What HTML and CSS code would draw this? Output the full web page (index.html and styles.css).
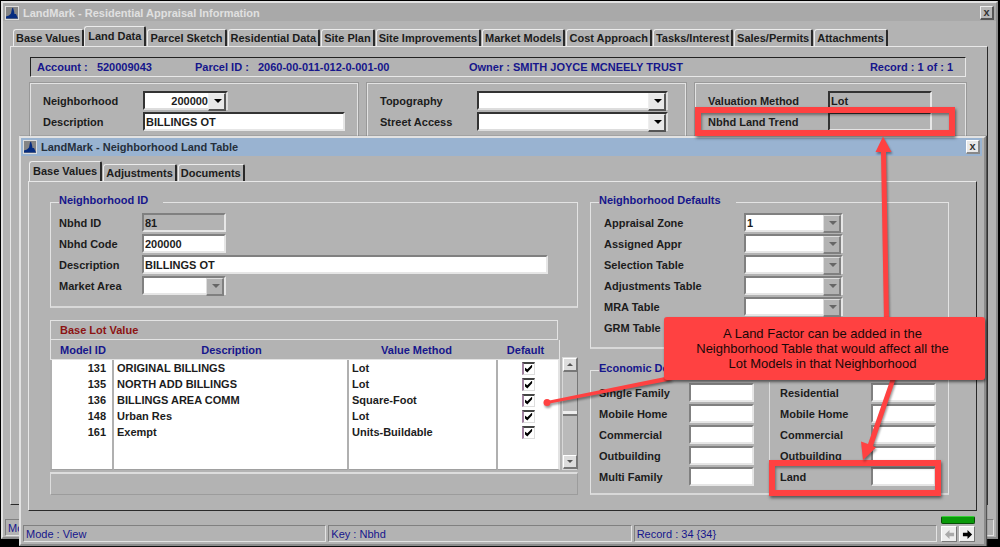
FILE: index.html
```html
<!DOCTYPE html>
<html lang="en">
<head>
<meta charset="utf-8">
<title>LandMark - Residential Appraisal Information</title>
<link rel="stylesheet" href="styles.css">
</head>
<body>
<section class="window window-main">
  <header class="titlebar">
    <svg class="logo" viewBox="0 0 14 14"><path class="logo-bg" d="M0 0h14v14H0z"/><path class="logo-peak" d="M1 12.500V10.500l3-1 2-2 1-5L8 1.500 9 5l.5 3 1.500 0 2 4.500z"/></svg>
    <h1 class="title">LandMark - Residential Appraisal Information</h1>
    <button class="close" type="button">x</button>
  </header>
  <nav class="tabs">
    <button class="tab" type="button">Base Values</button>
    <button class="tab active" type="button">Land Data</button>
    <button class="tab" type="button">Parcel Sketch</button>
    <button class="tab" type="button">Residential Data</button>
    <button class="tab" type="button">Site Plan</button>
    <button class="tab" type="button">Site Improvements</button>
    <button class="tab" type="button">Market Models</button>
    <button class="tab" type="button">Cost Approach</button>
    <button class="tab" type="button">Tasks/Interest</button>
    <button class="tab" type="button">Sales/Permits</button>
    <button class="tab" type="button">Attachments</button>
  </nav>
  <main class="panel">
    <div class="account">
      <span>Account :&nbsp;&nbsp; 520009043</span>
      <span>Parcel ID :&nbsp;&nbsp; 2060-00-011-012-0-001-00</span>
      <span>Owner : SMITH JOYCE MCNEELY TRUST</span>
      <span>Record : 1 of : 1</span>
    </div>
    <div class="parcel">
      <div class="box">
        <div class="row"><label class="label" for="hood">Neighborhood</label><span class="combo combo-short"><select class="field right" id="hood"><option>200000</option></select></span></div>
        <div class="row"><label class="label" for="desc">Description</label><input class="field dark grow" id="desc" value="BILLINGS OT"></div>
      </div>
      <div class="box box-middle">
        <div class="row"><label class="label" for="topo">Topography</label><span class="combo grow"><select class="field" id="topo"><option></option></select></span></div>
        <div class="row"><label class="label" for="street">Street Access</label><span class="combo grow"><select class="field" id="street"><option></option></select></span></div>
      </div>
      <div class="box">
        <div class="row"><label class="label wide" for="method">Valuation Method</label><input class="field dark readonly medium" id="method" value="Lot" readonly></div>
        <div class="row"><label class="label wide" for="trend">Nbhd Land Trend</label><input class="field dark readonly medium" id="trend" readonly></div>
      </div>
    </div>
  </main>
  <footer class="status"><div class="cells"><span class="cell">Mode : View</span></div></footer>
</section>

<section class="window window-child">
  <header class="titlebar">
    <svg class="logo" viewBox="0 0 14 14"><path class="logo-bg" d="M0 0h14v14H0z"/><path class="logo-peak" d="M1 12.500V10.500l3-1 2-2 1-5L8 1.500 9 5l.5 3 1.500 0 2 4.500z"/></svg>
    <h2 class="title">LandMark - Neighborhood Land Table</h2>
    <button class="close" type="button">x</button>
  </header>
  <nav class="tabs">
    <button class="tab active" type="button">Base Values</button>
    <button class="tab" type="button">Adjustments</button>
    <button class="tab" type="button">Documents</button>
  </nav>
  <main class="panel columns">
    <div class="column">
      <fieldset class="group">
        <legend class="legend">Neighborhood ID</legend>
        <div class="row"><label class="label" for="nid">Nbhd ID</label><input class="field readonly short" id="nid" value="81" readonly></div>
        <div class="row"><label class="label" for="ncode">Nbhd Code</label><input class="field short" id="ncode" value="200000"></div>
        <div class="row"><label class="label" for="ndesc">Description</label><input class="field long" id="ndesc" value="BILLINGS OT"></div>
        <div class="row"><label class="label" for="market">Market Area</label><span class="combo muted short"><select class="field" id="market"><option></option></select></span></div>
      </fieldset>
      <div class="models">
        <table class="table">
          <caption class="caption">Base Lot Value</caption>
          <colgroup><col class="col-id"><col><col class="col-method"><col class="col-default"></colgroup>
          <thead><tr><th class="th-id">Model ID</th><th>Description</th><th class="th-method">Value Method</th><th class="th-default">Default</th></tr></thead>
          <tbody>
            <tr><td class="num">131</td><td>ORIGINAL BILLINGS</td><td>Lot</td><td class="mark"><input class="check" type="checkbox" aria-label="Default 131" checked></td></tr>
            <tr><td class="num">135</td><td>NORTH ADD BILLINGS</td><td>Lot</td><td class="mark"><input class="check" type="checkbox" aria-label="Default 135" checked></td></tr>
            <tr><td class="num">136</td><td>BILLINGS AREA COMM</td><td>Square-Foot</td><td class="mark"><input class="check" type="checkbox" aria-label="Default 136" checked></td></tr>
            <tr><td class="num">148</td><td>Urban Res</td><td>Lot</td><td class="mark"><input class="check" type="checkbox" aria-label="Default 148" checked></td></tr>
            <tr><td class="num">161</td><td>Exempt</td><td>Units-Buildable</td><td class="mark"><input class="check" type="checkbox" aria-label="Default 161" checked></td></tr>
            <tr class="filler"><td></td><td></td><td></td><td></td></tr>
          </tbody>
        </table>
        <div class="scrollbar">
          <button class="scroll-button up" type="button" aria-label="Scroll up"></button>
          <span class="thumb"></span>
          <button class="scroll-button down" type="button" aria-label="Scroll down"></button>
        </div>
        <div class="message"></div>
      </div>
    </div>
    <div class="column">
      <fieldset class="group defaults">
        <legend class="legend">Neighborhood Defaults</legend>
        <div class="row"><label class="label" for="zone">Appraisal Zone</label><span class="combo muted"><select class="field" id="zone"><option>1</option></select></span></div>
        <div class="row"><label class="label" for="appr">Assigned Appr</label><span class="combo muted"><select class="field" id="appr"><option></option></select></span></div>
        <div class="row"><label class="label" for="sel">Selection Table</label><span class="combo muted"><select class="field" id="sel"><option></option></select></span></div>
        <div class="row"><label class="label" for="adj">Adjustments Table</label><span class="combo muted"><select class="field" id="adj"><option></option></select></span></div>
        <div class="row"><label class="label" for="mra">MRA Table</label><span class="combo muted"><select class="field" id="mra"><option></option></select></span></div>
        <div class="row"><label class="label" for="grm">GRM Table</label><span class="combo muted"><select class="field" id="grm"><option></option></select></span></div>
      </fieldset>
      <fieldset class="group economic">
        <legend class="legend">Economic Depreciation</legend>
        <div class="factors">
          <div class="row"><label class="label" for="e1">Single Family</label><input class="field" id="e1"></div>
          <div class="row"><label class="label" for="e2">Mobile Home</label><input class="field" id="e2"></div>
          <div class="row"><label class="label" for="e3">Commercial</label><input class="field" id="e3"></div>
          <div class="row"><label class="label" for="e4">Outbuilding</label><input class="field" id="e4"></div>
          <div class="row"><label class="label" for="e5">Multi Family</label><input class="field" id="e5"></div>
        </div>
        <div class="factors second">
          <div class="row"><label class="label" for="f1">Residential</label><input class="field" id="f1"></div>
          <div class="row"><label class="label" for="f2">Mobile Home</label><input class="field" id="f2"></div>
          <div class="row"><label class="label" for="f3">Commercial</label><input class="field" id="f3"></div>
          <div class="row"><label class="label" for="f4">Outbuilding</label><input class="field" id="f4"></div>
          <div class="row"><label class="label" for="f5">Land</label><input class="field" id="f5"></div>
        </div>
      </fieldset>
    </div>
  </main>
  <footer class="status">
    <div class="cells"><span class="cell">Mode : View</span><span class="cell">Key : Nbhd</span><span class="cell">Record : 34 {34}</span></div>
    <div class="pager">
      <span class="lamp"></span>
      <button class="page-button" type="button" aria-label="Previous record" disabled><svg class="arrow" viewBox="0 0 12 12"><path d="M1 6l5-5v3h5v4H6v3z"/></svg></button>
      <button class="page-button" type="button" aria-label="Next record"><svg class="arrow" viewBox="0 0 12 12"><path d="M11 6L6 1v3H1v4h5v3z"/></svg></button>
    </div>
  </footer>
</section>

<div class="highlight highlight-trend"></div>
<div class="highlight highlight-land"></div>
<svg class="pointers" viewBox="0 0 460 547">
  <path d="M344 320L341 152H335.500L343 136.500 351.500 152H346L349 320z"/>
  <path d="M351 378L328 444 321 441.500 323 460 336 447.500 333 446 356 378z"/>
  <path d="M125 377L7 401v3L133 380z"/>
  <circle cx="7" cy="402.500" r="3.500"/>
</svg>
<div class="callout">A Land Factor can be added in the Neighborhood Table that would affect all the Lot Models in that Neighborhood</div>
</body>
</html>
```

FILE: styles.css
```css
* { box-sizing: border-box; }

body {
  margin: 0;
  min-height: 100vh;
  overflow: hidden;
  background: #000;
  color: #1c1c1c;
  font: bold 11px/14px "Liberation Sans", Arial, sans-serif;
}

button, input, select { font: inherit; color: inherit; border-radius: 0; }

/* Windows */
.window {
  position: absolute;
  display: flex;
  flex-direction: column;
  background: #b3b3b3;
  border: 2px solid #e2e2e2;
  border-right-color: #8c8c8c;
  border-bottom-color: #8c8c8c;
}
.window-main { inset: 1px 2px 8px 1px; }
.window-child { inset: 136px 14px 1px 19px; box-shadow: 1px 0 1px #555; }

.titlebar {
  display: flex;
  align-items: center;
  gap: 4px;
  height: 18px;
  padding: 0 2px;
  background: #a9a9a9;
  color: #e0e0e0;
}
.window-child .titlebar { background: #99b3d1; color: #26303c; margin-right: 2px; }
.window-main .titlebar { padding-top: 1px; }
.title { flex: 1; margin: 0; font: inherit; }
.logo { width: 14px; height: 14px; outline: 1px solid #ddd; outline-offset: -1px; }
.logo-bg { fill: #858585; }
.logo-peak { fill: #062c80; }
.close {
  width: 14px;
  height: 14px;
  padding: 0;
  border: 1px solid #eee;
  border-right: 2px solid #555;
  border-bottom: 2px solid #555;
  background: #b8b8b8;
  color: #333;
  line-height: 9px;
}
.window-child .close { background: #e8e8e8; border-color: #fff #888 #888 #fff; }

/* Tabs */
.tabs { display: flex; align-items: flex-end; height: 25px; padding: 0 10px; }
.tab {
  height: 17px;
  padding: 0 2px;
  border: 1px solid #ececec;
  border-right: 2px solid #2a2a2a;
  border-bottom: 0;
  border-radius: 3px 2px 0 0;
  background: #b3b3b3;
  white-space: nowrap;
}
.tab + .tab { margin-left: 1px; }
.tab.active { height: 20px; padding: 0 3px 2px; margin-left: 0; }
.window-child .tabs { height: 25px; padding: 0 8px; }

.panel {
  flex: 1;
  min-height: 0;
  border: 1px solid #e8e8e8;
  border-right: 1px solid #2a2a2a;
  border-bottom: 1px solid #2a2a2a;
}
.window-main .panel { margin: 0 8px 0 7px; padding: 10px 21px 0 19px; }
.window-child .panel { margin: 0 7px 0 7px; padding: 11px 27px 0 21px; }

.account {
  display: grid;
  grid-template-columns: 158px 274px 1fr auto;
  align-items: center;
  height: 20px;
  padding: 0 12px 0 6px;
  border: 1px solid #e8e8e8;
  border-top: 1px solid #222;
  border-left: 1px solid #222;
  color: #16168c;
}

.parcel {
  display: grid;
  grid-template-columns: 1fr 319px 271px;
  gap: 9px;
  margin-top: 6px;
}
.box {
  height: 80px;
  padding: 6px 12px;
  border: 1px solid #e3e3e3;
  box-shadow: 0 0 0 1px #999;
}
.box-middle { padding-right: 17px; }

/* Form rows */
.row { display: flex; align-items: center; height: 21px; }
.label { flex: none; width: 83px; white-space: nowrap; }
.parcel .label { width: 100px; }
.parcel .box-middle .label { width: 97px; }
.parcel .label.wide { width: 120px; }
.grow { flex: 1; min-width: 0; }
.short { width: 84px; }
.medium { width: 104px; }
.long { flex: 1; min-width: 0; margin-right: 29px; }

.field {
  height: 19px;
  padding: 0 2px 0 1px;
  border: 2px solid #e6e6e6;
  border-top-color: #808080;
  border-left-color: #808080;
  background: #fff;
  outline: 0;
  appearance: none;
}
.dark { border-top-color: #333; border-left-color: #333; }
.readonly { background: #b3b3b3; }

.combo { position: relative; display: flex; height: 19px; }
.combo .field { width: 100%; border-color: #333 #ddd #ddd #333; }
.combo.muted .field { border-color: #808080 #e6e6e6 #e6e6e6 #808080; }
.combo-short { width: 85px; }
.combo .right { padding-right: 18px; text-align-last: right; }
/* Drop-down button over the right end of a combo */
.combo::before {
  content: "";
  position: absolute;
  top: 2px;
  right: 2px;
  width: 15px;
  height: 15px;
  border: 1px solid #eee;
  border-right: 2px solid #555;
  border-bottom: 2px solid #555;
  background: #e8e8e8;
  pointer-events: none;
}
.combo::after {
  content: "";
  position: absolute;
  top: 8px;
  right: 6px;
  border: 4px solid transparent;
  border-top: 4px solid #000;
  border-bottom: 0;
  pointer-events: none;
}
.combo.muted::before { background: #b3b3b3; border-color: #ddd #808080 #808080 #ddd; }
.combo.muted::after { border-top-color: #666; }

/* Group boxes */
.columns { display: grid; grid-template-columns: 1fr 359px; gap: 12px; }
.column { display: flex; flex-direction: column; gap: 12px; min-width: 0; }
.group {
  min-width: 0;
  margin: 0;
  padding: 1px 0 10px 8px;
  border: 1px solid #e3e3e3;
  border-bottom: 2px solid #d8d8d8;
}
.legend { padding: 0 15px 4px 0; color: #16168c; }
.defaults { padding-bottom: 9px; }
.defaults .row { padding-left: 5px; }
.defaults .label { width: 140px; }
.defaults .combo { width: 99px; }
.economic { display: grid; grid-template-columns: 170px 1fr; padding: 3px 0 6px 8px; }
.factors .label { width: 90px; }
.factors .field { width: 65px; }
.second { padding-left: 10px; border-left: 1px solid #ddd; }
.second .label { width: 91px; }

/* Model table */
.models { display: grid; grid-template-columns: 1fr 16px; column-gap: 2px; }
.table { width: 100%; border-spacing: 0; table-layout: fixed; }
.caption {
  height: 20px;
  margin-right: 2px;
  padding: 2px 9px;
  border: 1px solid #e3e3e3;
  text-align: left;
  color: #8c1414;
}
.col-id { width: 64px; }
.col-method { width: 149px; }
.col-default { width: 62px; }
th { height: 20px; padding: 0; color: #16168c; font-weight: bold; border-bottom: 1px solid #e3e3e3; }
.th-id { padding-left: 9px; text-align: left; border-left: 1px solid #e3e3e3; }
.th-method { padding-right: 14px; }
.th-default { padding-right: 6px; border-right: 1px solid #e3e3e3; }
td { height: 16px; padding: 0 0 0 3px; background: #fff; border-right: 2px solid #b0b0b0; line-height: 14px; }
td:first-child { border-left: 2px solid #b0b0b0; }
td:last-child { border-right-color: #e3e3e3; }
.num { padding-right: 6px; text-align: right; }
.mark { padding: 0; text-align: center; }
.filler td { height: 30px; border-bottom: 1px solid #a0a0a0; }
.check {
  display: block;
  width: 13px;
  height: 13px;
  margin: 0 auto;
  border: 1px solid #ddd;
  border-top: 2px solid #444;
  border-left: 2px solid #a080a0;
  background: #fff;
  appearance: none;
}
.check:checked::before {
  content: "";
  display: block;
  width: 8px;
  height: 8px;
  margin: 1px;
  background: #000;
  clip-path: polygon(0 35%, 35% 60%, 95% 0, 95% 35%, 35% 100%, 0 70%);
}

.scrollbar {
  display: flex;
  flex-direction: column;
  justify-content: space-between;
  margin-top: 37px;
  border: 1px solid #d8d8d8;
  border-right: 1px solid #777;
  background: #bababa;
}
.scroll-button {
  display: grid;
  place-items: center;
  height: 14px;
  padding: 0;
  border: 1px solid #fff;
  border-right-color: #777;
  border-bottom: 2px solid #777;
  background: #ddd;
}
.scroll-button::before { content: ""; border: 3px solid transparent; }
.up::before { border-top: 0; border-bottom-color: #555; }
.down::before { border-bottom: 0; border-top-color: #555; }
.thumb { height: 5px; background: #eee; border-bottom: 2px solid #777; }
.message {
  grid-column: 1 / -1;
  height: 23px;
  margin-top: 2px;
  border: 1px solid #9c9c9c;
  border-top: 2px solid #ddd;
  border-left: 1px solid #ddd;
}

/* Status bars */
.status { display: flex; align-items: flex-end; gap: 4px; padding: 14px 2px 1px; }
.window-child .status { padding: 5px 9px 2px 2px; }
.cells { flex: 1; display: grid; grid-auto-flow: column; grid-auto-columns: 1fr; gap: 2px; }
.cell {
  height: 17px;
  padding: 1px 2px;
  border: 1px solid #e3e3e3;
  border-top-color: #808080;
  border-left-color: #808080;
  color: #16168c;
  font-weight: normal;
}
.pager { display: grid; grid-template-columns: 16px 16px; gap: 2px; }
.lamp {
  grid-column: 1 / -1;
  height: 8px;
  border: 1px solid #064d06;
  border-top-color: #39d039;
  border-radius: 2px;
  background: #0a9a0a;
}
.page-button {
  display: grid;
  place-items: center;
  height: 16px;
  padding: 0;
  border: 1px solid #fff;
  border-right-color: #777;
  border-bottom-color: #777;
  background: #eee;
}
.arrow { width: 11px; height: 11px; fill: #000; }
.page-button:disabled .arrow { fill: #aaa; }

/* Annotations over the windows */
.highlight {
  position: absolute;
  border: 6px solid #ff4141;
  box-shadow: 1px 2px 3px #0008, inset 1px 2px 3px #0006;
  pointer-events: none;
}
.highlight-trend { top: 107px; right: 45px; width: 260px; height: 29px; }
.highlight-land { top: 460px; right: 59px; width: 172px; height: 36px; }
.pointers {
  position: absolute;
  top: 0;
  right: 0;
  width: 460px;
  height: 547px;
  fill: #ff4141;
  filter: drop-shadow(1px 2px 1px #0006);
  pointer-events: none;
}
.callout {
  position: absolute;
  top: 317px;
  right: 15px;
  width: 321px;
  padding: 9px 28px 9px 24px;
  border-radius: 3px;
  background: #ff4141;
  box-shadow: 1px 2px 3px #0008;
  color: #1a0808;
  font-size: 13px;
  font-weight: normal;
  line-height: 15px;
  text-align: center;
}
```
